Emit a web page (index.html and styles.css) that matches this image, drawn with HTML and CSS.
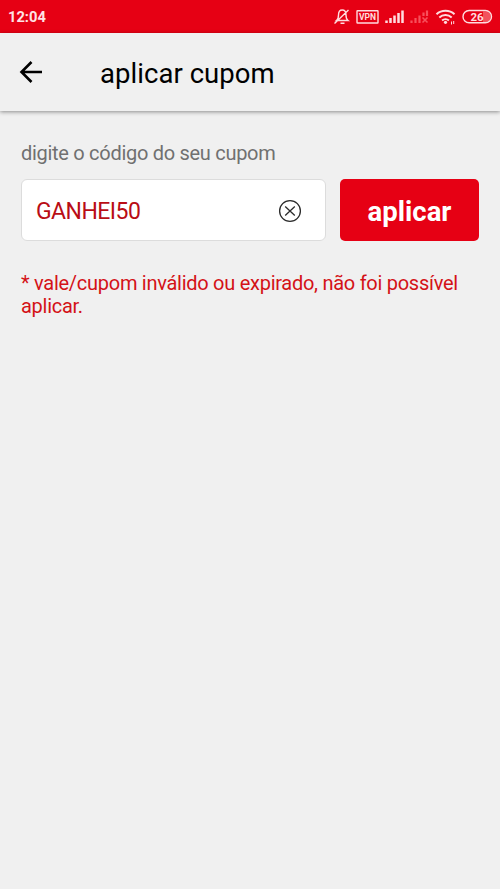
FILE: index.html
```html
<!DOCTYPE html>
<html lang="pt-BR">
<head>
<meta charset="utf-8">
<meta name="viewport" content="width=device-width">
<title>aplicar cupom</title>
<link rel="stylesheet" href="styles.css">
</head>
<body>
<div class="status">
  <span class="clock">12:04</span>
  <svg class="status-icons" width="166" height="33" viewBox="334 0 166 33" fill="none" stroke="#ffdcdf" stroke-width="1.4">
    <path d="M336.500 20.500c2-1.500 2-3 2-5.500 0-3 1.400-5 3.700-5s3.800 2 3.800 5c0 2.500 0 4 2 5.500zM340.500 23.200h4M348.500 10l-14 13.500"/>
    <rect x="357" y="10.700" width="21" height="12.300" rx=".5"/>
    <text class="vpn" x="367.500" y="20" text-anchor="middle">VPN</text>
    <path stroke-width="2.500" d="M386.500 23v-2.500M390.500 23v-5M394.500 23v-7.500M398.500 23v-10M402.500 23v-12.500"/>
    <path stroke="#f7505c" stroke-width="2.200" d="M411.500 23v-2.500M415.500 23v-5M419.500 23v-7.500M423.500 16v-3.500M427 16v-5.500"/>
    <path stroke="#f7505c" stroke-width="1.600" d="M422.500 17.500l5 5M427.500 17.500l-5 5"/>
    <path stroke-width="2" d="M436.500 14.200c5-4.600 13-4.600 18 0M439.300 17.500c3.500-3.200 8.900-3.200 12.400 0M442.100 20.500c1.900-1.700 4.900-1.700 6.800 0"/>
    <circle cx="445.500" cy="22.300" r="1.600" fill="#ffdcdf" stroke="none"/>
    <path stroke-width="1" d="M451.500 21.500v3M453.700 21v3"/>
    <path fill="#f2525d" stroke="none" d="M483 11.500h2.500a5.300 5.300 0 0 1 0 10.600H483z"/>
    <rect x="463" y="10.500" width="28.500" height="12.300" rx="6.150"/>
    <text class="battery" x="477" y="20.900" text-anchor="middle">26</text>
  </svg>
</div>
<header class="toolbar">
  <svg class="back" width="24" height="24" viewBox="0 0 24 24" fill="none" stroke="#000" stroke-width="2.600"><path d="M23 12H2.500M12.500 2L2.500 12l10 10"/></svg>
  <h1 class="title">aplicar cupom</h1>
</header>
<main class="content">
  <div class="label">digite o código do seu cupom</div>
  <div class="form">
    <div class="field">
      <span>GANHEI50</span>
      <svg width="24" height="24" viewBox="0 0 24 24" fill="none" stroke="#2b2b2b" stroke-width="1.300"><circle cx="12" cy="12" r="10.400"/><path d="M7.200 7.600l9.600 8.800M16.800 7.600l-9.600 8.800"/></svg>
    </div>
    <button class="apply">aplicar</button>
  </div>
  <p class="error">* vale/cupom inválido ou expirado, não foi possível aplicar.</p>
</main>
</body>
</html>
```
FILE: styles.css
```css
* { box-sizing: border-box; }
body {
  margin: 0;
  min-height: 889px;
  background: #f0f0f0;
  font-family: Roboto, sans-serif;
}
.status {
  display: flex;
  justify-content: space-between;
  height: 33px;
  padding-left: 8px;
  background: #e60014;
}
.clock {
  color: #ffe3e5;
  font-size: 14.7px;
  font-weight: 700;
  line-height: 34px;
}
.vpn, .battery {
  fill: #ffdcdf;
  stroke: none;
  font-weight: 700;
}
.vpn { font-size: 8.5px; }
.battery { font-size: 11.5px; }
.toolbar {
  display: flex;
  align-items: center;
  height: 78px;
  padding: 0 19px;
  box-shadow: 0 1px 4px rgba(0, 0, 0, .42);
}
.title {
  margin: 3px 0 0 57px;
  font-size: 27.5px;
  font-weight: 400;
  line-height: 32px;
  letter-spacing: .05px;
}
.content { padding: 30px 21px; }
.label {
  color: #707070;
  font-size: 20px;
  line-height: 24px;
  letter-spacing: -.29px;
}
.form {
  display: flex;
  gap: 14px;
  margin-top: 14px;
}
.field {
  display: flex;
  align-items: center;
  justify-content: space-between;
  width: 305px;
  height: 62px;
  padding: 2px 23px 0 14px;
  border: 1.5px solid #dcdcdc;
  border-radius: 6px;
  background: #fff;
  color: #b90d15;
  font-size: 23px;
  letter-spacing: -.55px;
}
.apply {
  width: 139px;
  height: 62px;
  padding: 3px 0 0;
  border: 0;
  border-radius: 5px;
  background: #e60014;
  color: #fff;
  font: 700 27.5px Roboto, sans-serif;
}
.error {
  margin: 31px 0 0;
  color: #d41217;
  font-size: 20px;
  line-height: 23px;
  letter-spacing: -.27px;
}
```
